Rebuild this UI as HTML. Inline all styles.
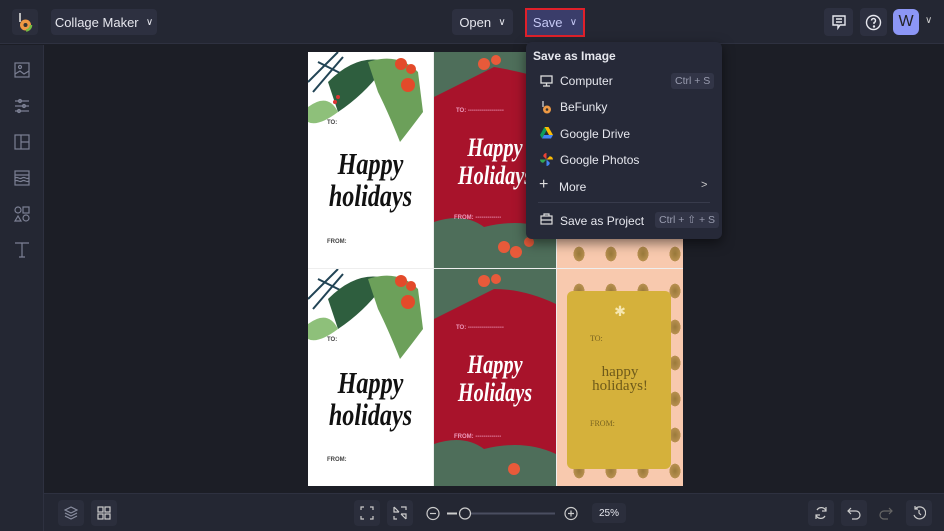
<!DOCTYPE html>
<html><head><meta charset="utf-8"><style>
*{margin:0;padding:0;box-sizing:border-box}
body{width:944px;height:531px;background:#1c1e26;font-family:"Liberation Sans",sans-serif;position:relative;overflow:hidden;color:#e6e7ee}
.top{position:absolute;left:0;top:0;width:944px;height:44px;background:#242733;border-bottom:1px solid #2e3140}
.side{position:absolute;left:0;top:45px;width:44px;height:486px;background:#242733;border-right:1px solid #2e3140}
.bot{position:absolute;left:44px;top:493px;width:900px;height:38px;background:#242733;border-top:1px solid #2e3140}
.btn{position:absolute;background:#2d3040;border-radius:4px;font-size:13px;color:#e6e7ee;display:flex;align-items:center;justify-content:center}
.ic{position:absolute}
.card{position:absolute;overflow:hidden}
.script{font-family:"Liberation Serif",serif;font-style:italic;font-weight:bold;text-align:center;line-height:1;transform:scaleX(0.78);transform-origin:center}
.menu{position:absolute;left:526px;top:42px;width:196px;height:197px;background:#262938;border-radius:6px;box-shadow:0 4px 12px rgba(0,0,0,.5)}
.mi{position:absolute;left:34px;font-size:12px;color:#e6e7ee}
.kb{position:absolute;font-size:10.5px;color:#9a9db0;background:#323547;padding:2px 4px;border-radius:3px}
.pine{background-color:#f8c9ae;background-image:radial-gradient(ellipse 9px 12px at 50% 50%,#9a7a3a 0,#b89050 60%,transparent 62%);background-size:32px 36px;background-position:6px 4px}
</style></head><body>
<div class="top"></div>
<div class="btn" style="left:12px;top:9px;width:26px;height:26px;background:#2b2e3c">
<svg width="16" height="20" viewBox="0 0 16 20"><line x1="3" y1="1" x2="3" y2="10" stroke="#ddd" stroke-width="1.6"/><circle cx="8.5" cy="13" r="5.5" fill="#e94"/><circle cx="8.5" cy="13" r="5.5" fill="none" stroke="#7b4" stroke-width="2.5" stroke-dasharray="8 30"/><circle cx="8.5" cy="13" r="2" fill="#333"/></svg></div>
<div class="btn" style="left:51px;top:9px;width:106px;height:26px">Collage Maker&nbsp;&nbsp;<span style="font-size:10px">&#8744;</span></div>
<div class="btn" style="left:452px;top:9px;width:61px;height:26px">Open&nbsp;&nbsp;<span style="font-size:10px">&#8744;</span></div>
<div class="btn" style="left:525px;top:8px;width:60px;height:29px;background:#3a3d6a;border:2px solid #e0202a;border-radius:0;color:#c6c9f5">Save&nbsp;&nbsp;<span style="font-size:10px">&#8744;</span></div>
<div class="btn" style="left:824px;top:8px;width:29px;height:28px"><svg width="16" height="16" viewBox="0 0 16 16" fill="none" stroke="#e6e7ee" stroke-width="1.4"><path d="M2 2h12v9H9l-2 3v-3H2z"/><path d="M5 5h6M5 8h6"/></svg></div>
<div class="btn" style="left:860px;top:8px;width:27px;height:28px"><svg width="17" height="17" viewBox="0 0 17 17" fill="none" stroke="#e6e7ee" stroke-width="1.4"><circle cx="8.5" cy="8.5" r="7"/><path d="M6.5 6.5a2 2 0 1 1 2.5 2v1.5"/><circle cx="9" cy="12.5" r=".5" fill="#e6e7ee"/></svg></div>
<div class="btn" style="left:893px;top:9px;width:26px;height:26px;background:#8c96f5;border-radius:6px;font-size:16px;color:#222">W</div>
<div style="position:absolute;left:925px;top:15px;font-size:10px;color:#ccc">&#8744;</div>

<div class="side"></div>
<svg class="ic" style="left:14px;top:62px" width="16" height="200" viewBox="0 0 16 200" fill="none" stroke="#7c8094" stroke-width="1.2">
<rect x="1" y="1" width="14" height="14"/><circle cx="6" cy="5" r="1.5"/><path d="M1 12l5-3 4 3 5-3"/>
<path d="M1 39h14M1 44h14M1 49h14"/><circle cx="6" cy="39" r="1.5"/><circle cx="10" cy="44" r="1.5"/><circle cx="5" cy="49" r="1.5"/>
<rect x="1" y="73" width="14" height="14"/><path d="M7 73v14M7 80h8"/>
<rect x="1" y="109" width="14" height="14"/><path d="M1 113h14M1 116c3-2 4 2 7 0s4 2 7 0M1 119c3-2 4 2 7 0s4 2 7 0"/>
<circle cx="4" cy="148" r="3"/><rect x="9" y="145" width="6" height="6"/><path d="M1 159l3-5 3 5z"/><circle cx="12" cy="156" r="3"/>
<path d="M1 181h14M8 181v14M5 195h6"/></svg>

<div style="position:absolute;left:308px;top:52px;width:375px;height:434px;background:#eee"></div>
<div class="card" style="left:308px;top:52px;width:125px;height:216px;background:#fff">
<svg width="125" height="100" style="position:absolute;left:0;top:0"><path d="M0 30L30 0M5 40L35 5M10 10L40 25" stroke="#245" stroke-width="2"/><path d="M20 30Q50 0 80 10Q60 40 30 60Z" fill="#2e5e3e"/><path d="M60 10Q90 0 110 20L115 60Q100 80 92 90Q80 60 70 40Z" fill="#6ca05a"/><path d="M0 55Q20 40 30 60Q10 75 0 70Z" fill="#8ec07a"/><circle cx="93" cy="12" r="6" fill="#e34a2a"/><circle cx="103" cy="17" r="5" fill="#e34a2a"/><circle cx="100" cy="33" r="7" fill="#e34a2a"/><circle cx="30" cy="45" r="2" fill="#d33"/><circle cx="27" cy="50" r="2" fill="#d33"/></svg>
<div style="position:absolute;left:19px;top:68px;font-size:6px;font-weight:bold;color:#444">TO:</div>
<div class="script" style="position:absolute;left:0;top:96px;width:125px;font-size:31px;line-height:32px;color:#111">Happy<br>holidays</div>
<div style="position:absolute;left:19px;top:187px;font-size:6px;font-weight:bold;color:#444">FROM:</div></div>
<div class="card" style="left:308px;top:269px;width:125px;height:217px;background:#fff">
<svg width="125" height="100" style="position:absolute;left:0;top:0"><path d="M0 30L30 0M5 40L35 5M10 10L40 25" stroke="#245" stroke-width="2"/><path d="M20 30Q50 0 80 10Q60 40 30 60Z" fill="#2e5e3e"/><path d="M60 10Q90 0 110 20L115 60Q100 80 92 90Q80 60 70 40Z" fill="#6ca05a"/><path d="M0 55Q20 40 30 60Q10 75 0 70Z" fill="#8ec07a"/><circle cx="93" cy="12" r="6" fill="#e34a2a"/><circle cx="103" cy="17" r="5" fill="#e34a2a"/><circle cx="100" cy="33" r="7" fill="#e34a2a"/></svg>
<div style="position:absolute;left:19px;top:68px;font-size:6px;font-weight:bold;color:#444">TO:</div>
<div class="script" style="position:absolute;left:0;top:98px;width:125px;font-size:31px;line-height:32px;color:#111">Happy<br>holidays</div>
<div style="position:absolute;left:19px;top:188px;font-size:6px;font-weight:bold;color:#444">FROM:</div></div>
<div class="card" style="left:434px;top:52px;width:122px;height:216px;background:#a8132b">
<svg width="122" height="216" style="position:absolute"><path d="M0 0h122v30Q90 20 60 15Q30 30 0 45Z" fill="#4e6e5a"/><path d="M0 170Q30 160 50 175Q90 165 122 180V216H0Z" fill="#4e6e5a"/><circle cx="50" cy="12" r="6" fill="#e85a3a"/><circle cx="62" cy="8" r="5" fill="#e85a3a"/><circle cx="70" cy="195" r="6" fill="#e85a3a"/><circle cx="82" cy="200" r="6" fill="#e85a3a"/><circle cx="95" cy="190" r="5" fill="#e85a3a"/></svg>
<div style="position:absolute;left:22px;top:56px;font-size:6px;font-weight:bold;color:#e9b">TO: ------------------</div>
<div class="script" style="position:absolute;left:0;top:82px;width:122px;font-size:26px;line-height:28px;color:#fff">Happy<br>Holidays</div>
<div style="position:absolute;left:20px;top:163px;font-size:6px;font-weight:bold;color:#e9b">FROM: -------------</div></div>
<div class="card" style="left:434px;top:269px;width:122px;height:217px;background:#a8132b">
<svg width="122" height="217" style="position:absolute"><path d="M0 0h122v35Q90 20 60 20Q30 35 0 50Z" fill="#4e6e5a"/><path d="M0 175Q30 165 50 180Q90 170 122 185V217H0Z" fill="#4e6e5a"/><circle cx="50" cy="12" r="6" fill="#e85a3a"/><circle cx="62" cy="10" r="5" fill="#e85a3a"/><circle cx="80" cy="200" r="6" fill="#e85a3a"/></svg>
<div style="position:absolute;left:22px;top:56px;font-size:6px;font-weight:bold;color:#e9b">TO: ------------------</div>
<div class="script" style="position:absolute;left:0;top:82px;width:122px;font-size:26px;line-height:28px;color:#fff">Happy<br>Holidays</div>
<div style="position:absolute;left:20px;top:165px;font-size:6px;font-weight:bold;color:#e9b">FROM: -------------</div></div>
<div class="card pine" style="left:557px;top:52px;width:126px;height:216px"></div>
<div class="card pine" style="left:557px;top:269px;width:126px;height:217px">
<div style="position:absolute;left:10px;top:22px;width:104px;height:178px;background:#d5b13b;border-radius:6px"></div>
<div style="position:absolute;left:0;top:34px;width:126px;text-align:center;color:#f6e7b0;font-size:14px">&#10033;</div>
<div style="position:absolute;left:33px;top:65px;font-family:'Liberation Serif',serif;font-size:8px;color:#7a6420">TO:</div>
<div style="position:absolute;left:0;top:96px;width:126px;text-align:center;font-family:'Liberation Serif',serif;font-size:15px;line-height:14px;color:#6e5a1a">happy<br>holidays!</div>
<div style="position:absolute;left:33px;top:150px;font-family:'Liberation Serif',serif;font-size:8px;color:#7a6420">FROM:</div></div>

<div class="menu">
<div style="position:absolute;left:7px;top:7px;font-size:12px;font-weight:bold">Save as Image</div>
<svg class="ic" style="left:14px;top:33px" width="13" height="12" fill="none" stroke="#ddd" stroke-width="1.3"><rect x="1" y="1" width="11" height="7"/><path d="M6.5 8v3M3 11h7"/></svg>
<div class="mi" style="top:32px">Computer</div><div class="kb" style="left:145px;top:31px">Ctrl + S</div>
<svg class="ic" style="left:15px;top:58px" width="11" height="14"><line x1="2" y1="1" x2="2" y2="7" stroke="#ddd" stroke-width="1.2"/><circle cx="6" cy="9.5" r="4" fill="#e94"/><circle cx="6" cy="9.5" r="1.3" fill="#333"/></svg>
<div class="mi" style="top:58px">BeFunky</div>
<svg class="ic" style="left:14px;top:85px" width="13" height="12"><path d="M4.5 0h4l4.5 8h-4z" fill="#fbbc04"/><path d="M4.5 0L0 8l2 3.5L6.5 3.5z" fill="#0f9d58"/><path d="M2 11.5h9l2-3.5H4z" fill="#4285f4"/></svg>
<div class="mi" style="top:85px">Google Drive</div>
<svg class="ic" style="left:14px;top:111px" width="13" height="13"><path d="M6.5 6.5V0a3.3 3.3 0 0 0-3.3 3.3z" fill="#ea4335"/><path d="M6.5 6.5H13a3.3 3.3 0 0 0-3.3-3.3z" fill="#fbbc04"/><path d="M6.5 6.5V13a3.3 3.3 0 0 0 3.3-3.3z" fill="#4285f4"/><path d="M6.5 6.5H0a3.3 3.3 0 0 0 3.3 3.3z" fill="#34a853"/></svg>
<div class="mi" style="top:111px">Google Photos</div>
<div style="position:absolute;left:13px;top:134px;font-size:16px;color:#ddd">+</div>
<div class="mi" style="left:33px;top:138px">More</div>
<div style="position:absolute;left:175px;top:137px;font-size:11px;color:#ccc">&gt;</div>
<div style="position:absolute;left:12px;top:160px;width:172px;height:1px;background:#383b4c"></div>
<svg class="ic" style="left:14px;top:171px" width="13" height="12" fill="none" stroke="#ddd" stroke-width="1.2"><rect x="1" y="3" width="11" height="8"/><path d="M4 3V1h5v2M1 7h11"/></svg>
<div class="mi" style="top:172px">Save as Project</div><div class="kb" style="left:129px;top:170px">Ctrl + ⇧ + S</div>
</div>

<div class="bot"></div>
<div class="btn" style="left:58px;top:500px;width:26px;height:26px;background:#2b2e3c"><svg width="14" height="14" fill="none" stroke="#8a8ea0" stroke-width="1.2"><path d="M7 1l6 3-6 3-6-3zM1 7l6 3 6-3M1 10l6 3 6-3"/></svg></div>
<div class="btn" style="left:91px;top:500px;width:26px;height:26px;background:#2b2e3c"><svg width="14" height="14" fill="none" stroke="#ccc" stroke-width="1.2"><rect x="1" y="1" width="5" height="5"/><rect x="8" y="1" width="5" height="5"/><rect x="1" y="8" width="5" height="5"/><rect x="8" y="8" width="5" height="5"/></svg></div>
<div class="btn" style="left:354px;top:500px;width:26px;height:26px;background:#2b2e3c"><svg width="14" height="14" fill="none" stroke="#ccc" stroke-width="1.2"><path d="M1 4V1h3M10 1h3v3M13 10v3h-3M4 13H1v-3"/></svg></div>
<div class="btn" style="left:387px;top:500px;width:26px;height:26px;background:#2b2e3c"><svg width="14" height="14" fill="none" stroke="#ccc" stroke-width="1.2"><path d="M1 1v5h5M1 1l5 5M13 13V8H8M13 13L8 8M8 1h5v3M1 10v3h3"/></svg></div>
<svg class="ic" style="left:425px;top:506px" width="160" height="15" fill="none" stroke="#ccc" stroke-width="1.2"><circle cx="8" cy="7.5" r="6"/><path d="M5 7.5h6"/><path d="M22 7.5h10" stroke-width="2"/><path d="M45 7.5h85" stroke="#4a4e60" stroke-width="2"/><circle cx="40" cy="7.5" r="5.5" fill="#242733"/><circle cx="146" cy="7.5" r="6"/><path d="M143 7.5h6M146 4.5v6"/></svg>
<div class="btn" style="left:592px;top:503px;width:34px;height:20px;background:#2b2e3c;font-size:10px">25%</div>
<div class="btn" style="left:808px;top:500px;width:26px;height:26px;background:#2b2e3c"><svg width="14" height="14" fill="none" stroke="#ccc" stroke-width="1.2"><path d="M3 4a5 5 0 0 1 9 1M11 10a5 5 0 0 1-9-1M12 1v4H8M2 13V9h4"/></svg></div>
<div class="btn" style="left:841px;top:500px;width:26px;height:26px;background:#2b2e3c"><svg width="14" height="14" fill="none" stroke="#ccc" stroke-width="1.2"><path d="M4 2L1 5l3 3M1 5h8a4 4 0 0 1 0 8H5"/></svg></div>
<svg class="ic" style="left:879px;top:506px" width="14" height="14" fill="none" stroke="#666" stroke-width="1.2"><path d="M10 2l3 3-3 3M13 5H5a4 4 0 0 0 0 8h4"/></svg>
<div class="btn" style="left:906px;top:500px;width:26px;height:26px;background:#2b2e3c"><svg width="14" height="14" fill="none" stroke="#ccc" stroke-width="1.2"><path d="M3 3a6 6 0 1 1-1 6M3 0v3h3M7 4v3l2 2"/></svg></div>
</body></html>
